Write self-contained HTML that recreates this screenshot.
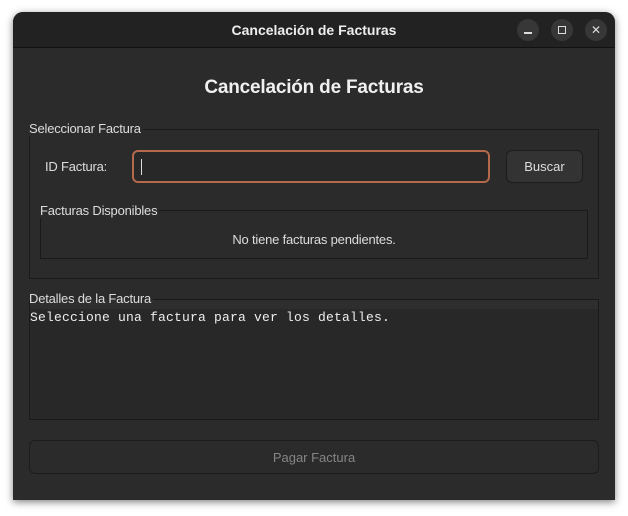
<!DOCTYPE html>
<html><head><meta charset="utf-8"><style>
*{margin:0;padding:0;box-sizing:border-box}
body{width:628px;height:516px;background:#fff;position:relative;font-family:"Liberation Sans",sans-serif;overflow:hidden}
.win{position:absolute;left:13px;top:12px;width:602px;height:488px;background:#2b2b2b;border-radius:10px 10px 0 0;overflow:hidden;box-shadow:0 2px 8px rgba(0,0,0,.5)}
.tb{position:absolute;left:0;top:0;width:602px;height:36px;background:#222;border-bottom:1px solid #111}
.tt{position:absolute;left:0;width:602px;top:10px;text-align:center;color:#eee;font-weight:bold;font-size:14px}
.wb{position:absolute;top:7px;width:22px;height:22px;border-radius:11px;background:#373737;color:#ddd;font-size:12px;text-align:center;line-height:22px}
.a{position:absolute;color:#ddd;font-size:13px;white-space:nowrap;letter-spacing:-0.2px}
.box{position:absolute;border:1px solid #1a1a1a}
</style></head><body>
<div class="win">
<div class="tb"><div class="tt">Cancelación de Facturas</div>
<div class="wb" style="left:504px"><div style="position:absolute;left:7px;top:13px;width:8px;height:1.5px;background:#ddd"></div></div>
<div class="wb" style="left:538px"><div style="position:absolute;left:7px;top:7px;width:8px;height:8px;border:1.5px solid #ddd"></div></div>
<div class="wb" style="left:572px">✕</div>
</div>
<div class="a" style="left:0;width:602px;text-align:center;top:65px;font-size:19px;font-weight:bold;color:#f0f0f0">Cancelación de Facturas</div>
<div class="box" style="left:16px;top:117px;width:570px;height:150px"></div>
<div class="a" style="left:16px;top:109px;background:#2b2b2b;padding-right:2px">Seleccionar Factura</div>
<div class="a" style="left:32px;top:147px">ID Factura:</div>
<div style="position:absolute;left:119px;top:138px;width:358px;height:33px;border:2px solid #b4684c;border-radius:6px;background:#282828"><div style="position:absolute;left:7px;top:7px;width:1px;height:16px;background:#ddd"></div></div>
<div style="position:absolute;left:493px;top:138px;width:77px;height:33px;border:1px solid #1c1c1c;border-radius:6px;background:#333;color:#ddd;font-size:13px;text-align:center;line-height:32px">Buscar</div>
<div class="box" style="left:27px;top:198px;width:548px;height:49px"></div>
<div class="a" style="left:27px;top:191px;background:#2b2b2b;padding-right:2px">Facturas Disponibles</div>
<div class="a" style="left:0;width:602px;text-align:center;top:220px">No tiene facturas pendientes.</div>
<div class="box" style="left:16px;top:287px;width:570px;height:121px;background:#282828"><div style="height:9px;background:#2e2e2e"></div></div>
<div class="a" style="left:16px;top:278px;background:#2b2b2b;padding-right:2px;height:10px;line-height:17px">Detalles de la Factura</div>
<div class="a" style="left:17px;top:298px;font-family:'Liberation Mono',monospace;font-size:13px;letter-spacing:0.2px;color:#eee">Seleccione una factura para ver los detalles.</div>
<div style="position:absolute;left:16px;top:428px;width:570px;height:34px;border:1px solid #1c1c1c;border-radius:6px;background:#2b2b2b;color:#858585;font-size:13px;text-align:center;line-height:33px">Pagar Factura</div>
</div>
</body></html>
